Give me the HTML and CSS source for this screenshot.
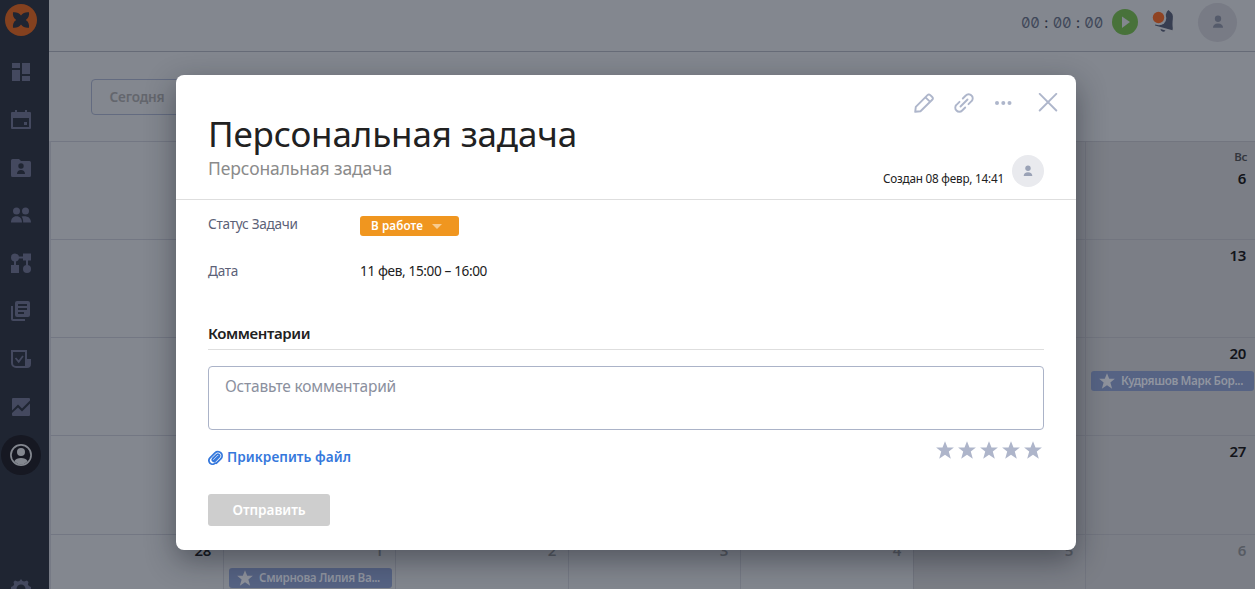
FILE: index.html
```html
<!DOCTYPE html>
<html lang="ru">
<head>
<meta charset="utf-8">
<title>Персональная задача</title>
<link rel="stylesheet" href="styles.css">
</head>
<body>
<svg class="defs" width="0" height="0">
  <symbol id="star" viewBox="0 0 18 18"><path d="M9 0.2l2.500 6.200h6.400l-5.100 4.200 2 7.200L9 13.700l-5.800 4.100 2-7.200-5.100-4.200h6.400z"/></symbol>
  <symbol id="person" viewBox="0 0 10 12"><circle cx="5" cy="3.200" r="2.700"/><path d="M0.700 11c0-2.300 1.600-3.800 4.300-3.800S9.300 8.700 9.300 11z"/></symbol>
</svg>
<div class="app">
  <nav class="sidebar">
    <a class="logo"><svg width="32" height="32" viewBox="0 0 32 32"><circle cx="16" cy="16" r="16" fill="#84411f"/><path d="M8 8.300c3-.4 6 .3 8 3.200 2-2.900 5-3.600 8-3.200.3 3-.2 5.700-3.200 7.700 3 2 3.500 4.700 3.200 7.700-3 .4-6-.3-8-3.200-2 2.900-5 3.600-8 3.200-.3-3 .2-5.700 3.200-7.700-3-2-3.500-4.700-3.200-7.700z" fill="#1f2532"/></svg></a>
    <a class="item"><svg viewBox="0 0 20 20"><path d="M1 1h8v5H1zM1 8h8v11H1zM11 1h8v11h-8zM11 14h8v5h-8z"/></svg></a>
    <a class="item"><svg viewBox="0 0 20 20"><path fill-rule="evenodd" d="M4 0h2v2h8V0h2v2h3a1 1 0 0 1 1 1v15a1 1 0 0 1-1 1H1a1 1 0 0 1-1-1V3a1 1 0 0 1 1-1h3zM2 8v9h16V8zM13 12h3v3h-3z"/></svg></a>
    <a class="item"><svg viewBox="0 0 20 20"><path fill-rule="evenodd" d="M1.500 1H8l2 2h8.500A1.500 1.500 0 0 1 20 4.500v13a1.500 1.500 0 0 1-1.500 1.500h-17A1.500 1.500 0 0 1 0 17.500v-15A1.500 1.500 0 0 1 1.500 1zM10 5.300a2.700 2.700 0 1 0 0 5.400 2.700 2.700 0 0 0 0-5.400zM6 16h8c0-2.600-1.600-4-4-4s-4 1.400-4 4z"/></svg></a>
    <a class="item"><svg viewBox="0 0 20 20"><circle cx="5.500" cy="6" r="3.500"/><circle cx="14.500" cy="6" r="3.500"/><path d="M0 17.500c0-4 2-6.300 5.500-6.300s5.500 2.300 5.500 6.300zM12.200 17.500c0-2.500-.4-4.500-1.700-6 5-1.200 9.500.5 9.500 6z"/></svg></a>
    <a class="item"><svg viewBox="0 0 20 20"><circle cx="4" cy="4.500" r="4"/><path d="M12 .5h8v7h-8zM0 12h8v8H0zM4 3.500h10v2H4zM3 6h2v7H3zM15 6h2v7h-2z"/><circle cx="16" cy="16" r="4"/></svg></a>
    <a class="item"><svg viewBox="0 0 20 20"><path fill-rule="evenodd" d="M6 0h11a2 2 0 0 1 2 2v12a2 2 0 0 1-2 2H6a2 2 0 0 1-2-2V2a2 2 0 0 1 2-2zM7 3v2h9V3zM7 7v2h9V7zM7 11v2h6v-2z"/><path d="M0 5h2v13h12v2H2a2 2 0 0 1-2-2z"/></svg></a>
    <a class="item"><svg viewBox="0 0 20 20"><path fill-rule="evenodd" d="M0 1h16v9h4v5a4 4 0 0 1-4 4H5a5 5 0 0 1-5-5zM2 3v11a3 3 0 0 0 3 3h9V3z"/><path d="M4.500 9l3.200 3.700L12 7" fill="none" stroke="#44495f" stroke-width="1.800"/></svg></a>
    <a class="item"><svg viewBox="0 0 20 20"><path d="M2 1h16a1 1 0 0 1 1 1v1.500l-8 8-4-4-6 6V2a1 1 0 0 1 1-1zM19 6.500V18a1 1 0 0 1-1 1H2a1 1 0 0 1-1-1v-2l6-5.500 4 4z"/></svg></a>
    <a class="item active"><svg viewBox="0 0 22 22"><circle cx="11" cy="11" r="10.100" fill="none" stroke="#83878f" stroke-width="1.700"/><circle cx="11" cy="8" r="4"/><path d="M4.300 17.300C5.500 15 8 14 11 14s5.500 1 6.700 3.300A10 10 0 0 1 11 20.500a10 10 0 0 1-6.700-3.200z"/></svg></a>
    <a class="item settings"><svg viewBox="0 0 20 20"><path fill-rule="evenodd" d="M8.500 2L10 0l1.500 2 1.700.6L16 1.500l1.500 1.500-.6 2.600 1 1.400 2.100 1v4l-2.500 1-.8 1.700 1 2.600-2.700 1.500-2-1L10 20l-3-3.200-2 1-2.700-1.500 1-2.600L2.500 12 0 11V8l2.100-1 1-1.400-.6-2.600L4 1.500l2.800 1.100zM10 5.500a4.500 4.500 0 1 0 0 9 4.500 4.500 0 0 0 0-9z"/></svg></a>
  </nav>
  <main class="page">
    <header class="topbar">
      <div class="timer"><span>00</span><i>:</i><span>00</span><i>:</i><span>00</span></div>
      <svg class="play" width="26" height="26" viewBox="0 0 26 26"><circle cx="13" cy="13" r="13" fill="#48723a"/><path d="M10 7.500l8 5.500-8 6z" fill="#83878f"/></svg>
      <svg class="bell" width="24" height="24" viewBox="0 0 24 24"><path d="M15 1.500l1.500-1.500 1.500 1.600c2.500 1.800 3.300 4 2.800 7.500-.4 3.500-.4 6.500 0 9.200l-.3 2L3 15.500l.5-1.300c4-.2 6.500-1.500 8.500-5.200z" fill="#373e51"/><path d="M8.500 19l5 1.600c-1.500 2.200-4.600 1.200-5-1.600z" fill="#373e51"/><circle cx="7" cy="8" r="7.300" fill="#83878f"/><circle cx="6.500" cy="7.500" r="5.700" fill="#8f4322"/></svg>
      <div class="user"><svg width="12" height="14"><use href="#person"/></svg></div>
    </header>
    <div class="toolbar"><button class="today">Сегодня</button></div>
    <div class="calendar">
      <div class="cell"></div><div class="cell"></div><div class="cell"></div><div class="cell"></div><div class="cell"></div><div class="cell off"></div>
      <div class="cell off first"><div class="weekday">Вс</div><div class="day">6</div></div>
      <div class="cell"></div><div class="cell"></div><div class="cell"></div><div class="cell"></div><div class="cell"></div><div class="cell off"></div>
      <div class="cell off"><div class="day">13</div></div>
      <div class="cell"></div><div class="cell"></div><div class="cell"></div><div class="cell"></div><div class="cell"></div><div class="cell off"></div>
      <div class="cell off"><div class="day">20</div><div class="event"><svg width="16" height="16"><use href="#star"/></svg>Кудряшов Марк Бор...</div></div>
      <div class="cell"></div><div class="cell"></div><div class="cell"></div><div class="cell"></div><div class="cell"></div><div class="cell off"></div>
      <div class="cell off"><div class="day">27</div></div>
      <div class="cell"><div class="day">28</div></div>
      <div class="cell"><div class="day next">1</div><div class="event"><svg width="16" height="16"><use href="#star"/></svg>Смирнова Лилия Ва...</div></div>
      <div class="cell"><div class="day next">2</div></div>
      <div class="cell"><div class="day next">3</div></div>
      <div class="cell"><div class="day next">4</div></div>
      <div class="cell off"><div class="day next">5</div></div>
      <div class="cell off"><div class="day next">6</div></div>
    </div>
  </main>
</div>

<section class="modal">
  <header class="modal-head">
    <div class="heading">
      <h1>Персональная задача</h1>
      <p>Персональная задача</p>
    </div>
    <div class="side">
      <div class="tools">
        <svg width="20" height="20" viewBox="0 0 20 20"><path d="M1.200 18.800l.6-5L13.500 2.100a2 2 0 0 1 2.800 0l1.900 1.900a2 2 0 0 1 0 2.800L6.500 18.200zM11.500 4.300l4.400 4.400M13.800 3.500"/></svg>
        <svg width="20" height="20" viewBox="0 0 20 20"><path d="M6.500 13.500l7-7M8.800 5.500l3-3a3.900 3.900 0 0 1 5.700 0 3.900 3.900 0 0 1 0 5.700l-3 3M11.200 14.500l-3 3a3.900 3.900 0 0 1-5.700 0 3.900 3.900 0 0 1 0-5.700l3-3"/></svg>
        <svg class="dots" width="18" height="20" viewBox="0 0 18 20"><circle cx="3" cy="10" r="2"/><circle cx="9.300" cy="10" r="2"/><circle cx="15.500" cy="10" r="2"/></svg>
        <svg class="close" width="20" height="20" viewBox="0 0 20 20"><path d="M1.700 0.900l16.600 16.600M18.300 0.900L1.700 17.500"/></svg>
      </div>
      <div class="meta"><span>Создан 08 февр, 14:41</span><div class="avatar"><svg width="10" height="12"><use href="#person"/></svg></div></div>
    </div>
  </header>
  <div class="modal-body">
    <div class="field"><span class="label status-label">Статус Задачи</span><span class="status">В работе<svg width="10" height="5" viewBox="0 0 10 5"><path d="M0 0h10L5 5z"/></svg></span></div>
    <div class="field"><span class="label">Дата</span><span class="date">11 фев, 15:00 – 16:00</span></div>
    <h2>Комментарии</h2>
    <div class="comment">Оставьте комментарий</div>
    <div class="under">
      <a class="attach"><svg width="15" height="15" viewBox="0 0 15 15"><path d="M4.800 8.500l3.900-3.900a1.700 1.700 0 0 1 2.400 2.400l-4.300 4.300M10.200 6.500l-3.900 3.900M8.400 13.200l4.400-4.400a4.100 4.100 0 0 0-5.800-6L2 7.800a3.700 3.700 0 0 0 5.200 5.300M4.800 8.500a1.700 1.700 0 0 0 2.400 2.400"/></svg>Прикрепить файл</a>
      <div class="stars"><svg><use href="#star"/></svg><svg><use href="#star"/></svg><svg><use href="#star"/></svg><svg><use href="#star"/></svg><svg><use href="#star"/></svg></div>
    </div>
    <button class="send">Отправить</button>
  </div>
</section>
</body>
</html>
```

FILE: styles.css
```css
* { box-sizing: border-box; }
body {
  margin: 0;
  width: 1255px;
  height: 589px;
  overflow: hidden;
  background: #83878f;
  font-family: "Noto Sans", "Open Sans", sans-serif;
  color: #212121;
}
h1, h2, p { margin: 0; font-weight: 400; }
button { font-family: inherit; border: 0; padding: 0; }
svg { display: block; flex: none; }
.defs { position: absolute; }

.app { display: flex; height: 589px; overflow: hidden; }

.sidebar {
  flex: none;
  width: 49px;
  padding: 4px 0 0 1px;
  background: #1f2532;
  display: flex;
  flex-direction: column;
  gap: 7.870px;
}
.logo { width: 40px; height: 40px; padding-left: 4px; flex: none; }
.item {
  flex: none;
  width: 40px;
  height: 40px;
  border-radius: 50%;
  display: grid;
  place-items: center;
}
.item svg { width: 20px; height: 20px; fill: #44495f; }
.item.active { background: #161822; }
.item.active svg { width: 22px; height: 22px; fill: #83878f; }
.settings { margin-top: 86px; }

.page { flex: none; width: 1209px; }
.topbar {
  width: 1206px;
  height: 52px;
  border-bottom: 1px solid #666b77;
  display: flex;
  justify-content: flex-end;
  align-items: center;
  padding: 0 18px 7px 0;
}
.timer {
  display: flex;
  width: 82px;
  margin-top: 2px;
  justify-content: space-between;
  font-family: "Inter", sans-serif;
  font-feature-settings: "zero", "tnum";
  font-size: 14.700px;
  line-height: 20px;
  letter-spacing: -0.200px;
  color: #3f4759;
}
.timer i { font-style: normal; color: #2b3040; }
.play { margin-left: 9px; }
.bell { margin-left: 14px; }
.user {
  width: 39px;
  height: 39px;
  margin-left: 22px;
  border-radius: 50%;
  background: #787b85;
  display: grid;
  place-items: center;
}
.user svg { fill: #555b6b; }

.toolbar { height: 89px; padding: 27px 0 0 42px; }
.today {
  width: 92px;
  height: 36px;
  padding-bottom: 2px;
  border: 1px solid #636b80;
  border-radius: 4px;
  background: none;
  color: #63666d;
  font-size: 13.600px;
  font-weight: 600;
  letter-spacing: -0.150px;
  text-align: center;
}

.calendar {
  width: 1209px;
  padding-left: 1px;
  background: #787c86;
  display: grid;
  grid-template-columns: 173px 172px 173px 172px 173px 172px 173px;
  grid-template-rows: 98px 98px 98px 99px 98px;
}
.cell {
  border-top: 1px solid #737783;
  border-left: 1px solid #767a85;
  background: #83878f;
  padding: 5px 12px 0 5px;
}
.cell.off { background: #7b7e86; border-color: #72757f; }
.day {
  height: 20px;
  text-align: right;
  font-size: 15px;
  line-height: 20px;
  font-weight: 600;
  letter-spacing: -0.300px;
  color: #12141a;
}
.day.next { color: #575b63; }
.weekday {
  height: 21px;
  margin-right: -1px;
  text-align: right;
  font-size: 11.500px;
  line-height: 20px;
  font-weight: 600;
  letter-spacing: -0.300px;
  color: #33363d;
}
.event {
  width: 163px;
  height: 20px;
  margin-top: 8px;
  padding: 0 0 1px 8px;
  border-radius: 3px;
  background: #566384;
  color: #9095a0;
  display: flex;
  align-items: center;
  gap: 6px;
  font-size: 11.700px;
  font-weight: 600;
  letter-spacing: -0.360px;
  line-height: 19px;
  white-space: nowrap;
}
.event svg { fill: #8e929c; }

.modal {
  position: absolute;
  left: 176px;
  top: 75px;
  width: 900px;
  height: 475px;
  border-radius: 8px;
  background: #fff;
  box-shadow: 0 10px 30px rgba(20, 24, 34, 0.45);
}
.modal-head {
  height: 125px;
  padding: 0 32px;
  border-bottom: 1px solid #dedede;
  display: flex;
  justify-content: space-between;
}
.heading { padding-top: 37px; white-space: nowrap; }
.heading h1 { font-size: 35px; line-height: 44px; letter-spacing: -0.160px; }
.heading p { font-size: 17.500px; line-height: 24px; letter-spacing: -0.105px; color: #8b8b8b; }
.side { display: flex; flex-direction: column; align-items: flex-end; padding-top: 18px; }
.tools { display: flex; gap: 20px; margin-right: -14px; }
.tools svg { fill: none; stroke: #aeb6cb; stroke-width: 1.900; stroke-linejoin: round; stroke-linecap: round; }
.tools .dots { fill: #aeb6cb; stroke: none; }
.tools .close { margin-left: 6px; }
.meta { display: flex; align-items: flex-end; gap: 8px; margin-top: 42px; }
.meta span { font-size: 11.700px; line-height: 17px; letter-spacing: -0.195px; }
.avatar {
  width: 32px;
  height: 32px;
  border-radius: 50%;
  background: #e9eaee;
  display: grid;
  place-items: center;
}
.avatar svg { fill: #9aa2b6; }

.modal-body { padding: 16px 32px 0; }
.field { display: flex; height: 20px; margin-bottom: 25px; font-size: 13.600px; line-height: 20px; }
.label { width: 152px; color: #5b6177; letter-spacing: -0.260px; }
.status-label { margin-top: -2px; }
.status {
  width: 99px;
  height: 20px;
  padding: 0 0 1px 11px;
  border-radius: 3px;
  background: #f0961f;
  color: #fff;
  display: flex;
  align-items: center;
  gap: 9px;
  font-size: 11.700px;
  line-height: 19px;
  font-weight: 600;
  letter-spacing: 0.080px;
}
.status svg { fill: #f8cb8f; margin-top: 2px; }
.date { letter-spacing: -0.370px; }
.modal-body h2 {
  height: 29px;
  margin: 40px 0 16px;
  border-bottom: 1px solid #dedede;
  font-size: 15px;
  line-height: 24px;
  font-weight: 600;
  letter-spacing: -0.400px;
}
.comment {
  height: 64px;
  padding: 7px 16px;
  border: 1px solid #abb3c8;
  border-radius: 4px;
  color: #8b909e;
  font-size: 15.500px;
  line-height: 24px;
  letter-spacing: -0.180px;
}
.under { display: flex; justify-content: space-between; height: 64px; padding-top: 11px; }
.attach {
  display: flex;
  align-items: center;
  height: 31px;
  gap: 4px;
  color: #3578dc;
  font-size: 13.600px;
  font-weight: 600;
  letter-spacing: 0.070px;
}
.attach svg { fill: none; stroke: #3578dc; stroke-width: 1.800; stroke-linecap: round; margin-top: 1px; }
.stars { display: flex; gap: 4px; padding-right: 2.500px; }
.stars svg { width: 18px; height: 18px; fill: #aeb5ca; }
.send {
  display: block;
  width: 122px;
  height: 32px;
  padding-bottom: 2px;
  border-radius: 3px;
  background: #cecece;
  color: #fff;
  font-size: 13.600px;
  font-weight: 600;
  letter-spacing: -0.040px;
}
```
